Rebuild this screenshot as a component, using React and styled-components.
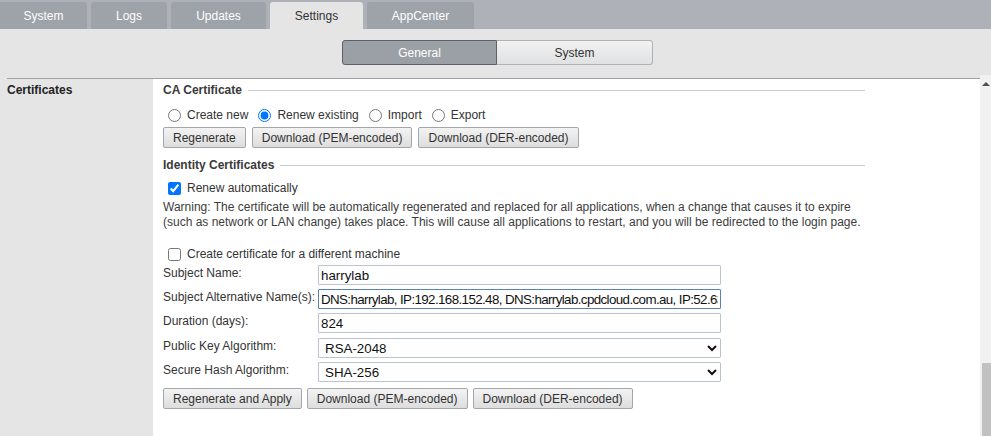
import React, { useState } from 'react';
import styled, { createGlobalStyle } from 'styled-components';

const GlobalStyle = createGlobalStyle`
  html, body {
    margin: 0;
    padding: 0;
    height: 100%;
    overflow: hidden;
  }
  body {
    font-family: 'Liberation Sans', Arial, sans-serif;
    font-size: 12px;
    color: #333;
    background: #e5e5e5;
  }
`;

const tabs = ['System', 'Logs', 'Updates', 'Settings', 'AppCenter'];
const tabWidths = [87, 76, 95, 93, 107];

const Page = styled.div`
  display: flex;
  flex-direction: column;
  height: 436px;
  width: 991px;
`;

const TabBar = styled.div`
  display: flex;
  align-items: flex-end;
  gap: 4px;
  height: 29px;
  background: #aeb1b7;
`;

const Tab = styled.div`
  display: flex;
  align-items: center;
  justify-content: center;
  height: 27px;
  width: ${(p) => p.$w}px;
  border-radius: 3px 3px 0 0;
  background: ${(p) => (p.$active ? '#e5e5e5' : '#9ea2a9')};
  color: ${(p) => (p.$active ? '#333' : '#fff')};
  font-size: 12px;
  &:first-child {
    border-radius: 0 3px 0 0;
  }
`;

const SubNav = styled.div`
  display: flex;
  justify-content: center;
  padding: 11px 0 0 4px;
  height: 35px;
  background: #e5e5e5;
`;

const Segment = styled.div`
  display: flex;
  height: 25px;
`;

const SegButton = styled.div`
  display: flex;
  align-items: center;
  justify-content: center;
  width: ${(p) => p.$w}px;
  box-sizing: border-box;
  font-size: 12px;
  color: ${(p) => (p.$active ? '#fff' : '#333')};
  background: ${(p) =>
    p.$active ? '#9ba0a7' : 'linear-gradient(#f2f2f2, #e0e1e3)'};
  border: 1px solid ${(p) => (p.$active ? '#5d6167' : '#b0b2b6')};
  border-radius: ${(p) => (p.$active ? '3px 0 0 3px' : '0 3px 3px 0')};
  ${(p) => !p.$active && 'border-left: none;'}
`;

const Body = styled.div`
  flex: 1;
  display: flex;
  min-height: 0;
`;

const Main = styled.div`
  flex: 1;
  display: flex;
  flex-direction: column;
  padding: 3px 0 0 7px;
  min-width: 0;
`;

const Panel = styled.div`
  flex: 1;
  display: flex;
  border-top: 1px solid #9ea3aa;
`;

const SideLabel = styled.div`
  width: 146px;
  padding-top: 4px;
  font-weight: bold;
  color: #222;
`;

const Content = styled.div`
  flex: 1;
  background: #fff;
  padding: 3px 0 0 10px;
`;

const Section = styled.div`
  width: 702px;
`;

const Heading = styled.div`
  display: flex;
  align-items: center;
  gap: 6px;
  height: 16px;
  margin-top: ${(p) => p.$mt || 0}px;
  font-weight: bold;
  color: #3a3a3a;
  &::after {
    content: '';
    flex: 1;
    height: 1px;
    background: #c3cad8;
  }
`;

const OptionRow = styled.div`
  display: flex;
  align-items: center;
  height: 20px;
  margin-top: ${(p) => p.$mt || 0}px;
  color: #333;
  input {
    margin: 0 6px 0 5px;
    width: 13px;
    height: 13px;
  }
`;

const Option = styled.label`
  display: flex;
  align-items: center;
  margin-right: 5px;
`;

const ButtonRow = styled.div`
  display: flex;
  gap: ${(p) => p.$gap || 5}px;
  margin-top: ${(p) => p.$mt || 0}px;
`;

const Button = styled.button`
  height: 21px;
  padding: 0 9px;
  font-family: 'Liberation Sans', Arial, sans-serif;
  font-size: 12px;
  color: #333;
  background: linear-gradient(#f3f3f3, #dddddd);
  border: 1px solid #a3a6ab;
  border-radius: 2px;
`;

const Warning = styled.p`
  margin: 2px 0 0;
  line-height: 15px;
  color: #3c3c3c;
`;

const Form = styled.div`
  display: flex;
  flex-direction: column;
  margin-top: 1px;
`;

const FieldRow = styled.div`
  display: flex;
  align-items: flex-start;
  height: ${(p) => p.$h || 24}px;
`;

const FieldLabel = styled.div`
  width: 155px;
  padding-top: 1px;
  line-height: 14px;
  color: #333;
`;

const TextInput = styled.input`
  box-sizing: border-box;
  width: 403px;
  height: 20px;
  padding: 0 2px;
  font-family: 'Liberation Sans', Arial, sans-serif;
  font-size: 13.33px;
  letter-spacing: ${(p) => (p.$tight ? '-0.6px' : 'normal')};
  color: #111;
  border: 1px solid ${(p) => (p.$focus ? '#5b80b8' : '#bcc4d0')};
  border-radius: 1px;
  outline: none;
  background: #fff;
`;

const Select = styled.select`
  box-sizing: border-box;
  width: 403px;
  height: 20px;
  padding: 0 4px 0 2px;
  font-family: 'Liberation Sans', Arial, sans-serif;
  font-size: 13.33px;
  color: #111;
  border: 1px solid #bcc4d0;
  border-radius: 1px;
  background: #fff;
`;

const Scrollbar = styled.div`
  width: 11px;
  display: flex;
  flex-direction: column;
  align-items: center;
  background: #f1f1f1;
`;

const Arrow = styled.div`
  margin-top: 7px;
  width: 0;
  height: 0;
  border-left: 4px solid transparent;
  border-right: 4px solid transparent;
  border-bottom: 4px solid #505050;
`;

const Thumb = styled.div`
  margin-top: auto;
  margin-left: 2px;
  width: 9px;
  height: 73px;
  background: #c1c1c1;
`;

export default function App() {
  const [caMode, setCaMode] = useState('renew');
  const [renew, setRenew] = useState(true);
  const [other, setOther] = useState(false);

  return (
    <Page>
      <GlobalStyle />
      <TabBar>
        {tabs.map((t, i) => (
          <Tab key={t} $w={tabWidths[i]} $active={t === 'Settings'}>
            {t}
          </Tab>
        ))}
      </TabBar>
      <SubNav>
        <Segment>
          <SegButton $active $w={155}>General</SegButton>
          <SegButton $w={156}>System</SegButton>
        </Segment>
      </SubNav>
      <Body>
        <Main>
          <Panel>
            <SideLabel>Certificates</SideLabel>
            <Content>
              <Section>
                <Heading>CA Certificate</Heading>
                <OptionRow $mt={7}>
                  {[
                    ['new', 'Create new'],
                    ['renew', 'Renew existing'],
                    ['import', 'Import'],
                    ['export', 'Export'],
                  ].map(([v, l]) => (
                    <Option key={v}>
                      <input
                        type="radio"
                        name="ca"
                        checked={caMode === v}
                        onChange={() => setCaMode(v)}
                      />
                      {l}
                    </Option>
                  ))}
                </OptionRow>
                <ButtonRow $mt={2} $gap={6}>
                  <Button>Regenerate</Button>
                  <Button>Download (PEM-encoded)</Button>
                  <Button>Download (DER-encoded)</Button>
                </ButtonRow>

                <Heading $mt={9}>Identity Certificates</Heading>
                <OptionRow $mt={5}>
                  <Option>
                    <input
                      type="checkbox"
                      checked={renew}
                      onChange={() => setRenew(!renew)}
                    />
                    Renew automatically
                  </Option>
                </OptionRow>
                <Warning>
                  Warning: The certificate will be automatically regenerated and
                  replaced for all applications, when a change that causes it to
                  expire (such as network or LAN change) takes place. This will
                  cause all applications to restart, and you will be redirected
                  to the login page.
                </Warning>
                <OptionRow $mt={14}>
                  <Option>
                    <input
                      type="checkbox"
                      checked={other}
                      onChange={() => setOther(!other)}
                    />
                    Create certificate for a different machine
                  </Option>
                </OptionRow>

                <Form>
                  <FieldRow>
                    <FieldLabel>Subject Name:</FieldLabel>
                    <TextInput defaultValue="harrylab" />
                  </FieldRow>
                  <FieldRow>
                    <FieldLabel>Subject Alternative Name(s):</FieldLabel>
                    <TextInput
                      $focus
                      $tight
                      defaultValue="DNS:harrylab, IP:192.168.152.48, DNS:harrylab.cpdcloud.com.au, IP:52.63.118.24"
                    />
                  </FieldRow>
                  <FieldRow $h={25}>
                    <FieldLabel>Duration (days):</FieldLabel>
                    <TextInput defaultValue="824" />
                  </FieldRow>
                  <FieldRow>
                    <FieldLabel>Public Key Algorithm:</FieldLabel>
                    <Select defaultValue="RSA-2048">
                      <option>RSA-2048</option>
                      <option>RSA-4096</option>
                      <option>ECDSA-P256</option>
                    </Select>
                  </FieldRow>
                  <FieldRow $h={26}>
                    <FieldLabel>Secure Hash Algorithm:</FieldLabel>
                    <Select defaultValue="SHA-256">
                      <option>SHA-256</option>
                      <option>SHA-384</option>
                      <option>SHA-512</option>
                    </Select>
                  </FieldRow>
                </Form>
                <ButtonRow>
                  <Button>Regenerate and Apply</Button>
                  <Button>Download (PEM-encoded)</Button>
                  <Button>Download (DER-encoded)</Button>
                </ButtonRow>
              </Section>
            </Content>
          </Panel>
        </Main>
        <Scrollbar>
          <Arrow />
          <Thumb />
        </Scrollbar>
      </Body>
    </Page>
  );
}
